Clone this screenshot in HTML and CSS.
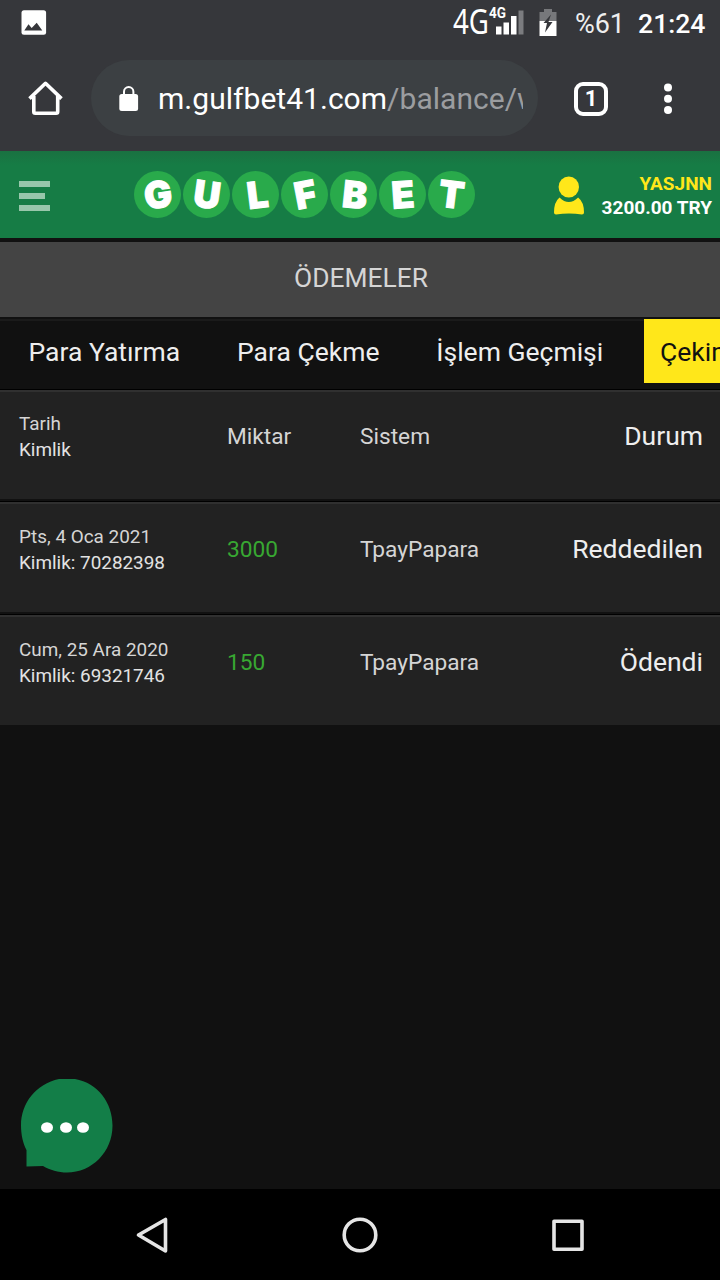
FILE: index.html
```html
<!DOCTYPE html>
<html lang="tr">
<head>
<meta charset="utf-8">
<title>Ödemeler</title>
<link rel="stylesheet" href="styles.css">
</head>
<body>
<div class="screen">
  <div class="status">
    <svg class="status-photo" width="26" height="26" viewBox="0 0 26 26"><rect x=".5" y=".2" width="24.6" height="24.6" rx="2.5" fill="#fff"/><path d="M3.300 20.500l4.200-6.200 3.200 3.800 5-5.400 5.600 7.800z" fill="#36373b"/></svg>
    <div class="status-right">
      <svg class="signal" width="74" height="36" viewBox="0 0 74 36" fill="#fff">
        <text class="net-big" x="1" y="33.500" textLength="36" lengthAdjust="spacingAndGlyphs">4G</text>
        <text class="net-small" x="37" y="18" textLength="17" lengthAdjust="spacingAndGlyphs">4G</text>
        <path d="M44 26.500h5.500v8H44zM51.500 22.500h5.500v12h-5.500zM59 16h5.500v18.500h-5.500z"/>
        <path d="M66.500 10.500h5v24h-5z" fill="#7b7c7f"/>
      </svg>
      <svg class="battery" width="18" height="27" viewBox="0 0 18 27"><path d="M5 0h8v3h4.500v9H.5V3H5z" fill="#77787b"/><path d="M.5 12h17v15H.5z" fill="#fff"/><path d="M12 5.500L4.500 14H8L6 23.500 13.500 13H9.500z" fill="#36373b"/></svg>
      <span class="percent">%61</span>
      <span class="clock">21:24</span>
    </div>
  </div>
  <div class="toolbar">
    <svg class="home" width="36" height="36" viewBox="0 0 36 36" fill="none" stroke="#fff" stroke-width="3.600" stroke-linejoin="round"><path d="M1.500 18.600L17.500 3.300l16 15.300M5.800 16v15.700q0 1.500 1.500 1.500h20.900q1.500 0 1.500-1.500V16"/></svg>
    <div class="address">
      <svg width="20" height="26" viewBox="0 0 20 26"><rect x=".3" y="8" width="18.800" height="17" rx="2.500" fill="#fff"/><path d="M5 9V5.800a4.700 4.700 0 0 1 9.400 0V9" fill="none" stroke="#fff" stroke-width="2"/></svg>
      <div class="url">m.gulfbet41.com<span class="path">/balance/w</span></div>
    </div>
    <div class="tabcount">1</div>
    <svg class="more" width="10" height="32" viewBox="0 0 10 32" fill="#fff"><circle cx="5" cy="4.500" r="4"/><circle cx="5" cy="15.700" r="4"/><circle cx="5" cy="27" r="4"/></svg>
  </div>
  <header class="header">
    <div class="burger"><i></i><i></i><i></i></div>
    <svg class="logo" width="342" height="48" viewBox="0 0 342 48">
      <g fill="#29aa4b"><circle cx="23.500" cy="23.500" r="23.500"/><circle cx="72.500" cy="23.500" r="23.500"/><circle cx="121.500" cy="23.500" r="23.500"/><circle cx="170.500" cy="23.500" r="23.500"/><circle cx="219.500" cy="23.500" r="23.500"/><circle cx="268.500" cy="23.500" r="23.500"/><circle cx="317.500" cy="23.500" r="23.500"/></g>
      <g class="logo-text">
        <text x="24" y="37" transform="rotate(-8 24 24)">G</text>
        <text x="73" y="37" transform="rotate(8 73 24)">U</text>
        <text x="123.500" y="37" transform="rotate(-7 123.500 24)">L</text>
        <text x="171.500" y="37" transform="rotate(-11 171.500 24)">F</text>
        <text x="221" y="37" transform="rotate(6 221 24)">B</text>
        <text x="269" y="37" transform="rotate(-4 269 24)">E</text>
        <text x="317.500" y="37" transform="rotate(7 317.500 24)">T</text>
      </g>
    </svg>
    <svg class="user" width="32" height="40" viewBox="0 0 32 40" fill="#ffe71a"><ellipse cx="15.800" cy="12" rx="10.200" ry="10.500"/><path d="M6.500 22.500q9.300 9 18.600 0Q31 27 31 37.500q0 2-2 2-13-2-26 0-2 0-2-2 0-10.500 5.500-15z"/></svg>
    <div class="account"><div class="name">YASJNN</div><div class="money">3200.00 TRY</div></div>
  </header>
  <h1 class="title">ÖDEMELER</h1>
  <nav class="tabs"><a>Para Yatırma</a><a>Para Çekme</a><a>İşlem Geçmişi</a><a class="active">Çekim Durumu</a></nav>
  <div class="row first">
    <div class="date">Tarih<br><b>Kimlik</b></div><div class="amount">Miktar</div><div class="system">Sistem</div><div class="state">Durum</div>
  </div>
  <div class="row">
    <div class="date">Pts, 4 Oca 2021<br><b>Kimlik: 70282398</b></div><div class="amount green">3000</div><div class="system">TpayPapara</div><div class="state">Reddedilen</div>
  </div>
  <div class="row last">
    <div class="date">Cum, 25 Ara 2020<br><b>Kimlik: 69321746</b></div><div class="amount green">150</div><div class="system">TpayPapara</div><div class="state">Ödendi</div>
  </div>
  <main class="rest">
    <svg width="92" height="94" viewBox="0 0 92 94"><path d="M38 0h16C77 4 91.500 24 91.500 46.500 91.500 73 71 93.500 46 93.500c-9 0-17-2.500-24-6.500l-16.500.5V71C2 65 0 55 0 46.500 0 24 15 5 38 0z" fill="#137e48"/><g fill="#fff"><ellipse cx="26" cy="48.500" rx="6" ry="5.300"/><ellipse cx="45" cy="48.500" rx="6" ry="5.300"/><ellipse cx="62" cy="48.500" rx="6" ry="5.300"/></g></svg>
  </main>
  <footer class="navbar">
    <svg width="36" height="40" viewBox="0 0 36 40"><path d="M4.500 20L31.500 4.500v31.500z"/></svg>
    <svg width="40" height="40" viewBox="0 0 40 40"><circle cx="20" cy="20" r="15.800"/></svg>
    <svg width="36" height="40" viewBox="0 0 36 40"><path d="M4 6.200h28v28H4z"/></svg>
  </footer>
</div>
</body>
</html>
```
FILE: styles.css
```css
* { box-sizing: border-box; }
body { margin: 0; background: #111; font-family: Roboto, "Liberation Sans", sans-serif; color: #eee; }
.screen { width: 720px; height: 1280px; overflow: hidden; display: flex; flex-direction: column; }
.screen > * { flex: none; }
svg { display: block; flex: none; }
.status { height: 47px; background: #36373b; display: flex; justify-content: space-between; padding-left: 21px; padding-right: 14.5px; }
.status-photo { margin-top: 10px; }
.status-right { display: flex; align-items: flex-start; color: #fff; }
.net-big { font: 35px "Noto Sans", sans-serif; }
.net-small { font: bold 15px Roboto, sans-serif; }
.battery { margin: 9px 18px 0 13px; }
.percent { font-size: 27px; line-height: 48px; color: #eee; margin-right: 13px; }
.clock { font-size: 26.6px; line-height: 48px; font-weight: 500; }
.toolbar { height: 104px; background: #36373b; display: flex; padding: 13px 47px 0 28px; }
.home { margin-top: 20px; }
.address { width: 447px; height: 76px; margin-left: 27px; border-radius: 38px; background: #3c4043; display: flex; padding-left: 28px; }
.address svg { margin-top: 26px; }
.url { width: 365px; margin-left: 19px; overflow: hidden; white-space: nowrap; font-size: 30px; line-height: 78px; color: #fff; letter-spacing: .03px; }
.path { color: #9b9da0; }
.tabcount { width: 34px; height: 34px; margin: 22px 0 0 36px; border: 4px solid #fff; border-radius: 9px; font-size: 22px; line-height: 26px; font-weight: 700; text-align: center; color: #fff; }
.more { margin: 23px 0 0 54.5px; }
.header { height: 87px; background: linear-gradient(#1a7141, #167c45 14px); display: flex; padding: 0 8px 0 19px; }
.burger { width: 31px; padding-top: 30px; display: flex; flex-direction: column; gap: 6px; }
.burger i { height: 6px; background: #98c7ab; }
.burger i:nth-child(2) { width: 26px; }
.logo { margin: 20px 0 0 84px; }
.logo-text { font: 900 37px Inter, sans-serif; fill: #fff; stroke: #fff; stroke-width: 1px; text-anchor: middle; }
.user { margin: 24px 0 0 77px; }
.account { flex: 1; text-align: right; font-size: 19px; font-weight: 700; line-height: 24px; padding-top: 21px; white-space: nowrap; }
.name { color: #ffe71a; }
.money { color: #fff; }
.title { height: 75px; margin: 4px 0 2px; background: #444; text-align: center; font-size: 26.4px; line-height: 73px; font-weight: 400; color: #d5d5d5; padding-left: 2px; }
.tabs { height: 70px; border-top: 2px solid #1b1b1b; padding-left: 12.5px; display: flex; gap: 24.8px; overflow: visible; white-space: nowrap; font-size: 26.5px; line-height: 62px; }
.tabs a { flex: none; padding: 0 16px; height: 64px; }
.tabs .active { background: #ffe71a; color: #111; margin-top: -2px; padding-top: 2px; }
.row { height: 110px; background: #222; border-top: 2px solid #303030; box-shadow: 0 -1px #000; margin-top: 1px; margin-bottom: 2px; display: grid; grid-template-columns: 208px 133px 1fr auto; padding: 1px 17px 0 19px; color: #d5d5d5; white-space: nowrap; }
.row.first { height: 109px; padding-top: 0; }
.row.last { margin-bottom: 0; }
.date { font-size: 18.9px; line-height: 26px; padding-top: 19px; }
.date b { font-weight: 400; color: #e2e2e2; }
.amount, .system { font-size: 22.7px; line-height: 90px; }
.green { color: #38a832; }
.state { font-size: 26.5px; line-height: 88px; color: #eee; }
.screen > .rest { flex: 1; padding: 354px 0 0 21px; }
.navbar { height: 91px; background: #000; display: flex; justify-content: space-between; padding: 26px 134px 0; }
.navbar svg { fill: none; stroke: #e5e5e5; stroke-width: 3.6px; stroke-linejoin: round; }
```
